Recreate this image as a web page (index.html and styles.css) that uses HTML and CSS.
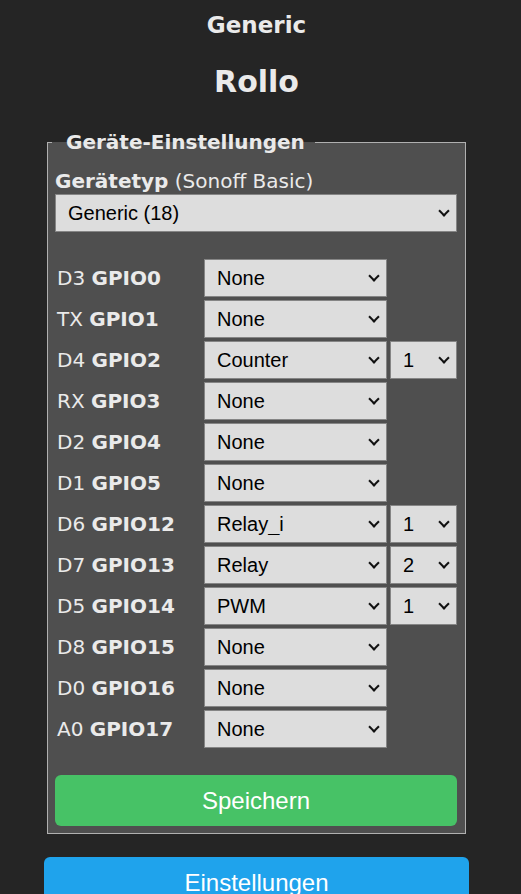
FILE: index.html
```html
<!DOCTYPE html>
<html lang="de">
<head>
<meta charset="utf-8">
<title>Generic - Rollo</title>
<link rel="stylesheet" href="styles.css">
</head>
<body>
<div class="page">
  <div class="head">
    <h3 class="dev">Generic</h3>
    <h2 class="name">Rollo</h2>
  </div>
  <form>
    <fieldset class="box">
      <legend class="box-title">Geräte-Einstellungen</legend>
      <div class="type-label"><b>Gerätetyp</b> (Sonoff Basic)</div>
      <div class="pick pick-full"><select class="sel"><option>Generic (18)</option></select></div>
      <div class="gpio">
        <div class="lbl">D3 <b>GPIO0</b></div>
        <div class="pick"><select class="sel"><option>None</option></select></div>
        <div></div>
        <div class="lbl">TX <b>GPIO1</b></div>
        <div class="pick"><select class="sel"><option>None</option></select></div>
        <div></div>
        <div class="lbl">D4 <b>GPIO2</b></div>
        <div class="pick"><select class="sel"><option>Counter</option></select></div>
        <div class="pick"><select class="sel"><option>1</option></select></div>
        <div class="lbl">RX <b>GPIO3</b></div>
        <div class="pick"><select class="sel"><option>None</option></select></div>
        <div></div>
        <div class="lbl">D2 <b>GPIO4</b></div>
        <div class="pick"><select class="sel"><option>None</option></select></div>
        <div></div>
        <div class="lbl">D1 <b>GPIO5</b></div>
        <div class="pick"><select class="sel"><option>None</option></select></div>
        <div></div>
        <div class="lbl">D6 <b>GPIO12</b></div>
        <div class="pick"><select class="sel"><option>Relay_i</option></select></div>
        <div class="pick"><select class="sel"><option>1</option></select></div>
        <div class="lbl">D7 <b>GPIO13</b></div>
        <div class="pick"><select class="sel"><option>Relay</option></select></div>
        <div class="pick"><select class="sel"><option>2</option></select></div>
        <div class="lbl">D5 <b>GPIO14</b></div>
        <div class="pick"><select class="sel"><option>PWM</option></select></div>
        <div class="pick"><select class="sel"><option>1</option></select></div>
        <div class="lbl">D8 <b>GPIO15</b></div>
        <div class="pick"><select class="sel"><option>None</option></select></div>
        <div></div>
        <div class="lbl">D0 <b>GPIO16</b></div>
        <div class="pick"><select class="sel"><option>None</option></select></div>
        <div></div>
        <div class="lbl">A0 <b>GPIO17</b></div>
        <div class="pick"><select class="sel"><option>None</option></select></div>
        <div></div>
      </div>
      <button type="button" class="btn btn-save">Speichern</button>
    </fieldset>
  </form>
  <button type="button" class="btn btn-conf">Einstellungen</button>
</div>
</body>
</html>
```
FILE: styles.css
```css
html, body {
  margin: 0;
  padding: 0;
  background: #252525;
}
body {
  font-family: "DejaVu Sans", Verdana, sans-serif;
  font-size: 20px;
  color: #eaeaea;
}
.page {
  width: 425px;
  margin-left: 44px;
}
.head {
  text-align: center;
}
.dev {
  margin: 11px 0 0;
  font-size: 23px;
  line-height: 28px;
  font-weight: bold;
}
.name {
  margin: 25px 0 0;
  font-size: 30px;
  line-height: 36px;
  font-weight: bold;
}
form {
  margin: 0;
}
.box {
  margin: 30px 3px 0;
  padding: 0 8px 7px 7px;
  border: 1px solid #b0b0b0;
  background: #4f4f4f;
  min-width: 0;
}
.box-title {
  margin-left: -3px;
  padding: 0 10px 0 14px;
  font-size: 20px;
  line-height: 24px;
  font-weight: bold;
}
.type-label {
  margin-top: 15px;
  line-height: 24px;
}
.pick {
  position: relative;
  height: 38px;
}
.pick::after {
  content: "";
  position: absolute;
  right: 9px;
  top: 13px;
  width: 6px;
  height: 6px;
  border-right: 2px solid #111;
  border-bottom: 2px solid #111;
  transform: rotate(45deg);
  pointer-events: none;
}
.pick-full {
  margin-top: 1px;
}
.sel {
  display: block;
  box-sizing: border-box;
  width: 100%;
  height: 38px;
  margin: 0;
  padding: 0 24px 0 12px;
  font-family: "Liberation Sans", Arial, sans-serif;
  font-size: 20px;
  color: #000;
  background-color: #dddddd;
  border: 1px solid #858585;
  border-radius: 0;
  -webkit-appearance: none;
  appearance: none;
}
.gpio {
  display: grid;
  grid-template-columns: 146px 183px 67px;
  grid-auto-rows: 38px;
  column-gap: 3px;
  row-gap: 3px;
  margin-top: 27px;
}
.lbl {
  align-self: center;
  padding-left: 2px;
  line-height: 24px;
  white-space: nowrap;
}
.btn {
  display: block;
  width: 100%;
  height: 51px;
  border: 0;
  border-radius: 6px;
  font-family: "Liberation Sans", Arial, sans-serif;
  font-size: 24px;
  color: #fff;
  padding: 0;
}
.btn-save {
  margin-top: 27px;
  background: #47c266;
}
.btn-conf {
  margin-top: 23px;
  background: #1fa3ec;
}
```
